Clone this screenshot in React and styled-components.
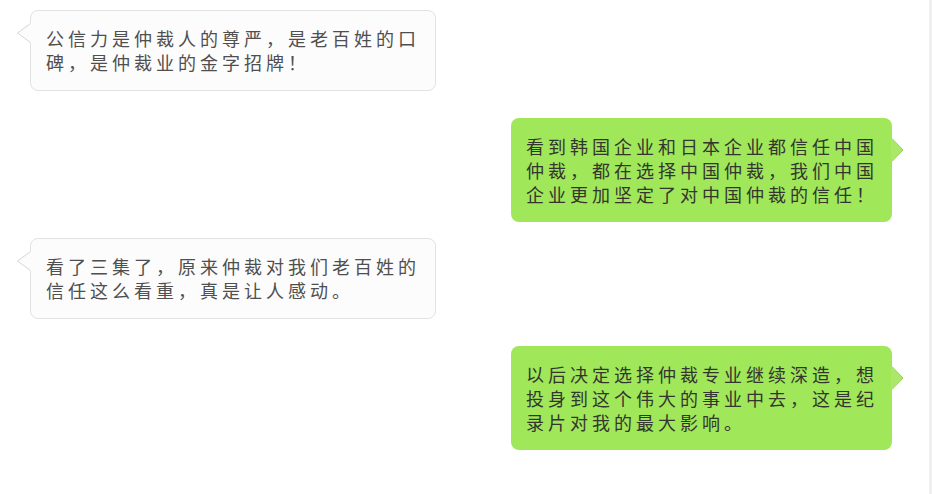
import React from 'react'
import styled, { createGlobalStyle } from 'styled-components'

const GlobalStyle = createGlobalStyle`
  html, body {
    margin: 0;
    padding: 0;
    background: #ffffff;
  }
  body {
    font-family: "Noto Sans CJK SC", "Noto Sans", sans-serif;
  }
`

const Page = styled.div`
  box-sizing: border-box;
  width: 932px;
  height: 494px;
  padding-top: 10px;
  background: #ffffff;
  border-right: 3px solid #efefef;
  overflow: hidden;
`

const Row = styled.div`
  display: flex;
  justify-content: ${p => (p.$mine ? 'flex-end' : 'flex-start')};
  margin-top: ${p => p.$gap}px;
  padding: ${p => (p.$mine ? '0 37px 0 0' : '0 0 0 30px')};
`

const Bubble = styled.div`
  position: relative;
  box-sizing: border-box;
  width: fit-content;
  border-radius: 8px;
  font-size: 18px;
  line-height: 24px;
  letter-spacing: 4px;
  white-space: nowrap;
  background: ${p => (p.$mine ? '#a0e75a' : '#fcfcfc')};
  color: ${p => (p.$mine ? '#34362e' : '#4f4f4f')};
  border: ${p => (p.$mine ? 'none' : '1px solid #e2e2e2')};
  padding: ${p => (p.$mine ? '16px 14px 16px 15px' : '15px 15px 16px')};
`

const Line = styled.div``

const LeftTail = styled.svg`
  position: absolute;
  left: -14px;
  top: 12px;
  width: 14px;
  height: 20px;
  overflow: visible;
`

const RightTail = styled.svg`
  position: absolute;
  left: 100%;
  top: 20px;
  width: 12px;
  height: 24px;
  overflow: visible;
`

const messages = [
  { mine: false, gap: 0, lines: ['公信力是仲裁人的尊严，是老百姓的口', '碑，是仲裁业的金字招牌！'] },
  { mine: true, gap: 27, lines: ['看到韩国企业和日本企业都信任中国', '仲裁，都在选择中国仲裁，我们中国', '企业更加坚定了对中国仲裁的信任！'] },
  { mine: false, gap: 16, lines: ['看了三集了，原来仲裁对我们老百姓的', '信任这么看重，真是让人感动。'] },
  { mine: true, gap: 27, lines: ['以后决定选择仲裁专业继续深造，想', '投身到这个伟大的事业中去，这是纪', '录片对我的最大影响。'] },
]

const Message = ({ mine, gap, lines }) => (
  <Row $mine={mine} $gap={gap}>
    <Bubble $mine={mine}>
      {mine ? (
        <RightTail viewBox="0 0 12 24">
          <path d="M-1 0 L11 12 L-1 24 Z" fill="#abe868" />
          <path d="M0 0.5 L11 12 L0 23.5" fill="none" stroke="#93d052" strokeWidth="1" />
        </RightTail>
      ) : (
        <LeftTail viewBox="0 0 14 20">
          <path d="M14 0 L0.5 10 L14 20 Z" fill="#fcfcfc" />
          <path d="M13.5 0.5 L0.5 10 L13.5 19.5" fill="none" stroke="#d6d6d6" strokeWidth="1" />
        </LeftTail>
      )}
      {lines.map((l, i) => (
        <Line key={i}>{l}</Line>
      ))}
    </Bubble>
  </Row>
)

const App = () => {
  return (
    <>
      <GlobalStyle />
      <Page>
        {messages.map((m, i) => (
          <Message key={i} {...m} />
        ))}
      </Page>
    </>
  )
}

export default App
